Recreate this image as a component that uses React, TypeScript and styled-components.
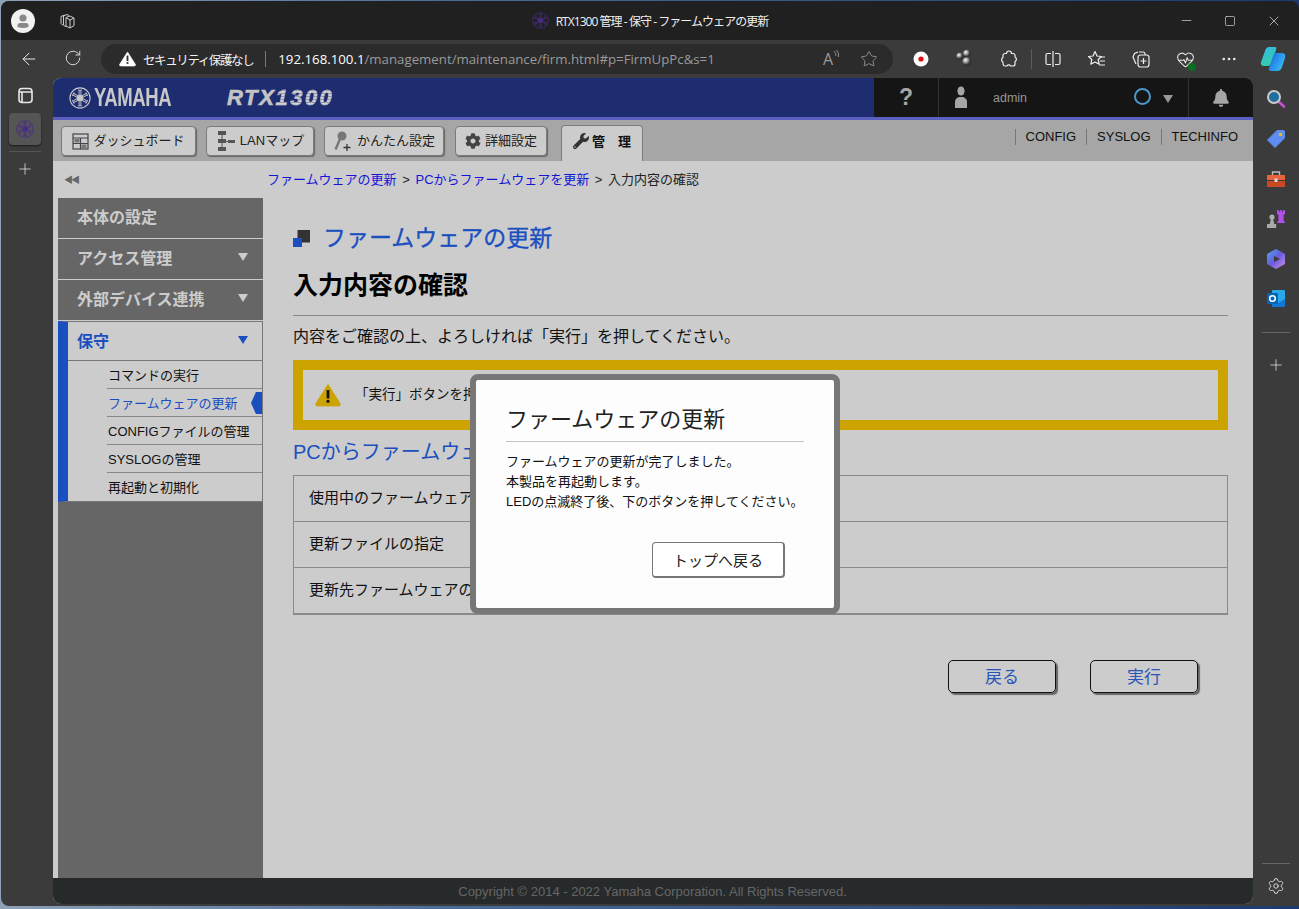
import React from "react";
import styled, { createGlobalStyle } from "styled-components";
import { ArrowLeft, RotateCw, Star, HeartPulse, Ellipsis, Minus, Square, X, Settings, Plus } from "lucide-react";
import { FaBell, FaCog, FaWrench } from "react-icons/fa";

const JP = `"Liberation Sans", "Noto Sans CJK JP", sans-serif`;
const UI = `"Open Sans", "Noto Sans CJK JP", sans-serif`;

const Global = createGlobalStyle`
  html, body { margin: 0; padding: 0; }
  body {
    width: 1299px;
    height: 909px;
    overflow: hidden;
    font-family: ${JP};
    background: linear-gradient(90deg, #8da2b8 0, #4a6a98 35%, #1d3a6e 100%);
  }
  * { box-sizing: border-box; }
`;

const Win = styled.div`
  position: relative;
  width: 1298px;
  height: 905px;
  margin: 1px 0 0 1px;
  background: #3b3b3b;
  border-radius: 8px 8px 0 8px;
  display: flex;
  flex-direction: column;
  overflow: hidden;
`;
const TitleBar = styled.div`
  height: 39px;
  background: #202020;
  display: grid;
  grid-template-columns: 1fr auto 1fr;
  align-items: center;
  color: #fff;
`;
const TitleLeft = styled.div`
  display: flex;
  align-items: center;
  gap: 23px;
  padding-left: 10px;
  color: #ccc;
`;
const Avatar = styled.div`
  width: 24px;
  height: 24px;
  border-radius: 50%;
  background: #f2f2f2;
  display: flex;
  align-items: center;
  justify-content: center;
`;
const TabTitle = styled.div`
  display: flex;
  align-items: center;
  gap: 7px;
  font: 12px ${UI};
  letter-spacing: -0.95px;
  color: #f0f0f0;
`;
const WinButtons = styled.div`
  display: flex;
  justify-content: flex-end;
  align-items: center;
  gap: 30px;
  padding-right: 17px;
  color: #eee;
`;
const Toolbar = styled.div`
  height: 38px;
  display: flex;
  align-items: center;
  color: #e8e8e8;
`;
const NavIcons = styled.div`
  width: 100px;
  display: flex;
  gap: 25px;
  padding-left: 18px;
`;
const Address = styled.div`
  width: 792px;
  height: 30px;
  border-radius: 15px;
  background: #2b2b2b;
  display: flex;
  align-items: center;
  padding: 0 15px 0 18px;
  font: 13.25px ${UI};
`;
const Secure = styled.span`
  margin-left: 7px;
  font-size: 12.5px;
  letter-spacing: -1.4px;
  color: #f2f2f2;
`;
const AddrSep = styled.span`
  width: 1px;
  height: 16px;
  margin: 0 12px;
  background: #777;
`;
const Host = styled.span`
  color: #fff;
`;
const Path = styled.span`
  color: #9a9a9a;
  flex: 1;
`;
const AddrIcons = styled.div`
  display: flex;
  align-items: center;
  gap: 20px;
  color: #999;
`;
const ReadAloud = styled.span`
  display: flex;
  align-items: flex-start;
  font: 16px "Open Sans", sans-serif;
  line-height: 18px;
`;
const ToolIcons = styled.div`
  display: flex;
  align-items: center;
  padding-left: 6px;
`;
const ToolCell = styled.div`
  width: 44px;
  height: 30px;
  display: flex;
  align-items: center;
  justify-content: center;
`;
const ToolSep = styled.div`
  width: 1px;
  height: 20px;
  margin: 0 -0.5px;
  background: #5c5c5c;
`;
const Body = styled.div`
  flex: 1;
  min-height: 0;
  display: flex;
`;
const LeftRail = styled.div`
  width: 52px;
  display: flex;
  flex-direction: column;
  align-items: center;
  padding: 9px 4px 0 0;
  color: #e8e8e8;
`;
const RailTile = styled.div`
  width: 32px;
  height: 32px;
  margin-top: 9px;
  border-radius: 4px;
  background: #555;
  display: flex;
  align-items: center;
  justify-content: center;
  box-shadow: 0 1px 2px #0008;
`;
const RailSep = styled.div`
  width: 32px;
  height: 1px;
  margin: 6px 0 8px;
  background: #555;
`;
const Page = styled.div`
  width: 1200px;
  margin-bottom: 2px;
  display: flex;
  flex-direction: column;
  position: relative;
  border-radius: 8px;
  overflow: hidden;
  background: #ccc;
`;
const RightRail = styled.div`
  width: 46px;
  padding-top: 1px;
  display: flex;
  flex-direction: column;
  align-items: center;
  color: #e8e8e8;
`;
const RailCell = styled.div`
  height: 40px;
  width: 100%;
  display: flex;
  align-items: center;
  justify-content: center;
`;
const RailLine = styled.div<{ $mt?: string; $mb?: string }>`
  width: 28px;
  height: 1px;
  background: #666;
  margin-top: ${(p) => p.$mt || "13px"};
  margin-bottom: ${(p) => p.$mb || "2px"};
`;
const HeaderBar = styled.header`
  height: 42px;
  display: flex;
  background: #1e2d70;
  border-bottom: 3px solid #5a5fc0;
`;
const Brand = styled.div`
  flex: 1;
  display: flex;
  align-items: center;
  padding-left: 16px;
  color: #c8c8c8;
`;
const Yamaha = styled.span`
  margin-left: 3px;
  width: 81px;
  font: bold 25px "Liberation Sans", sans-serif;
  transform: scaleX(0.74);
  transform-origin: left center;
  letter-spacing: -0.5px;
  white-space: nowrap;
`;
const ModelSolid = styled.span`
  margin-left: 52px;
  font: italic bold 22px "Liberation Sans", sans-serif;
  letter-spacing: 1.6px;
  color: #c4c4c4;
  -webkit-text-stroke: 0.6px #c4c4c4;
`;
const ModelStriped = styled.span`
  font: italic bold 22px "Liberation Sans", sans-serif;
  letter-spacing: 2.5px;
  background: repeating-linear-gradient(#d4d4d4 0 2px, #8f93b0 2px 3px);
  -webkit-background-clip: text;
  background-clip: text;
  color: transparent;
  -webkit-text-stroke: 0.5px #a9abbd;
`;
const HeaderRight = styled.div`
  width: 379px;
  background: #151515;
  display: flex;
  color: #a5a5a5;
`;
const HelpCell = styled.div`
  width: 65px;
  border-right: 1px solid #333;
  display: flex;
  align-items: center;
  justify-content: center;
  font: bold 23px "Liberation Sans", sans-serif;
`;
const UserCell = styled.div`
  width: 250px;
  border-right: 1px solid #333;
  display: flex;
  align-items: center;
  padding-left: 15px;
`;
const UserName = styled.span`
  margin-left: 25px;
  flex: 1;
  font-size: 12.5px;
  color: #959595;
`;
const StatusRing = styled.span`
  width: 17px;
  height: 17px;
  border: 2px solid #4b97c9;
  border-radius: 50%;
  margin: -3px 0 0 1px;
`;
const Caret = styled.span<{ $c?: string }>`
  width: 0;
  height: 0;
  border-left: 5px solid transparent;
  border-right: 5px solid transparent;
  border-top: 8px solid ${(p) => p.$c || "#999"};
`;
const HeadCaret = styled(Caret)`
  margin: 2px 15px 0 12px;
`;
const BellCell = styled.div`
  flex: 1;
  display: flex;
  align-items: center;
  justify-content: center;
  font-size: 18px;
`;
const NavBar = styled.nav`
  height: 41px;
  background: #a6a6a6;
  display: flex;
  align-items: flex-end;
  padding-left: 8px;
`;
const NavBtn = styled.div<{ $w: number; $mr: number }>`
  width: ${(p) => p.$w}px;
  height: 30px;
  margin: 0 ${(p) => p.$mr}px 5px 0;
  background: #ccc;
  border: 1px solid #7b7b7b;
  border-radius: 4px;
  box-shadow: 1px 1px 1px #666;
  display: flex;
  align-items: center;
  justify-content: center;
  gap: 4px;
  font-size: 13px;
  line-height: 26px;
  color: #222;
  white-space: nowrap;
`;
const ActiveTab = styled.div`
  width: 82px;
  height: 36px;
  background: #ccc;
  border: 1px solid #7b7b7b;
  border-bottom: 0;
  border-radius: 4px 4px 0 0;
  display: flex;
  align-items: center;
  justify-content: center;
  gap: 3px;
  font-weight: bold;
  font-size: 13px;
  color: #111;
  white-space: pre;
  padding-bottom: 6px;
`;
const NavLinks = styled.div`
  margin-left: auto;
  align-self: flex-start;
  margin-top: 9px;
  display: flex;
  padding-right: 5px;
`;
const NavLink = styled.span`
  border-left: 1px solid #777;
  padding: 0 10px;
  height: 16px;
  line-height: 16px;
  font-size: 13px;
  color: #111;
`;
const Main = styled.div`
  flex: 1;
  min-height: 0;
  display: flex;
`;
const Aside = styled.aside`
  width: 210px;
  display: flex;
  flex-direction: column;
`;
const Collapse = styled.div`
  height: 37px;
  padding: 14px 0 0 11px;
  color: #666;
  font-size: 9px;
  letter-spacing: -2px;
  line-height: 11px;
`;
const Menu = styled.div`
  flex: 1;
  margin-left: 5px;
  background: #666;
  display: flex;
  flex-direction: column;
  gap: 1px;
`;
const MenuHead = styled.div`
  height: 40px;
  background: #666;
  box-shadow: 0 1px 0 #ccc;
  display: flex;
  align-items: center;
  justify-content: space-between;
  padding: 0 15px 4px 19px;
  font-weight: bold;
  font-size: 16px;
  color: #ccc;
`;
const ActiveGroup = styled.div`
  background: #ccc;
  border: 1px solid #777;
  border-left: 10px solid #1a4fc0;
  margin-bottom: 1px;
`;
const ActiveHead = styled.div`
  height: 39px;
  border-bottom: 1px solid #777;
  display: flex;
  align-items: center;
  justify-content: space-between;
  padding: 0 14px 3px 9px;
  font-weight: bold;
  font-size: 16px;
  color: #1a4fc0;
`;
const SubItem = styled.div<{ $active?: boolean; $last?: boolean }>`
  position: relative;
  height: 28px;
  margin-left: 39px;
  display: flex;
  align-items: center;
  padding: 0 0 1px 1px;
  font-size: 13px;
  color: ${(p) => (p.$active ? "#1a4fc0" : "#111")};
  border-bottom: ${(p) => (p.$last ? "0" : "1px solid #888")};
`;
const ActiveTag = styled.span`
  position: absolute;
  right: 0;
  top: 3px;
  width: 11px;
  height: 22px;
  background: #1a4fc0;
  clip-path: polygon(100% 0, 45% 0, 0 50%, 45% 100%, 100% 100%);
`;
const Content = styled.main`
  flex: 1;
  min-width: 0;
`;
const Crumbs = styled.div`
  height: 37px;
  padding-left: 4px;
  line-height: 37px;
  font-size: 13px;
  color: #222;
`;
const CrumbLink = styled.span`
  color: #1414d8;
`;
const CrumbSep = styled.span`
  margin: 0 2px;
`;
const Inner = styled.div`
  padding: 0 25px 0 30px;
`;
const PageTitle = styled.h1`
  margin: 0;
  height: 57px;
  padding-top: 23px;
  display: flex;
  align-items: center;
  gap: 13px;
  font-size: 23px;
  line-height: 32px;
  font-weight: normal;
  color: #1a4fc0;
  -webkit-text-stroke: 0.3px #1a4fc0;
`;
const Sub = styled.h2`
  margin: 0;
  height: 61px;
  padding-top: 12px;
  border-bottom: 1px solid #8a8a8a;
  font-size: 25px;
  line-height: 36px;
  color: #000;
`;
const Lead = styled.p`
  margin: 0;
  height: 44px;
  line-height: 42px;
  font-size: 16px;
  color: #111;
`;
const Warning = styled.div`
  height: 70px;
  border: 10px solid #cca300;
  display: flex;
  align-items: center;
  padding-left: 12px;
  gap: 14px;
  font-size: 13.5px;
  color: #111;
`;
const WarningText = styled.span`
  margin-bottom: 4px;
`;
const Section = styled.h3`
  margin: 0;
  height: 45px;
  line-height: 44px;
  font-size: 20px;
  font-weight: normal;
  color: #1a4fc0;
`;
const InfoTable = styled.div`
  border: 1px solid #8a8a8a;
  border-bottom: 2px solid #8a8a8a;
`;
const Row = styled.div`
  height: 46px;
  padding: 0 0 4px 15px;
  border-top: 1px solid #8a8a8a;
  display: flex;
  align-items: center;
  font-size: 15px;
  color: #111;
  &:first-child {
    border-top: 0;
    height: 45px;
  }
`;
const Actions = styled.div`
  display: flex;
  justify-content: flex-end;
  gap: 34px;
  margin-top: 45px;
  padding-right: 30px;
`;
const ActionBtn = styled.div`
  width: 108px;
  height: 33px;
  border: 1px solid #111;
  border-radius: 5px;
  box-shadow: 2px 2px 1px #666;
  display: flex;
  align-items: center;
  justify-content: center;
  font-size: 17px;
  padding-bottom: 2px;
  color: #2a55b8;
`;
const Footer = styled.footer`
  height: 26px;
  background: #272a2b;
  color: #666;
  font-size: 13px;
  line-height: 27px;
  text-align: center;
  padding-right: 1px;
`;
const Dialog = styled.div`
  position: absolute;
  left: 417px;
  top: 296px;
  width: 370px;
  height: 240px;
  border: 6px solid #777;
  border-radius: 8px;
  background: #fdfdfd;
  padding: 23px 30px 0;
`;
const DialogTitle = styled.div`
  height: 39px;
  border-bottom: 1px solid #c4c4c4;
  font-size: 22px;
  line-height: 34px;
  color: #222;
`;
const DialogText = styled.p`
  margin: 10px 0 0;
  font-size: 13px;
  line-height: 20px;
  color: #111;
`;
const DialogBtn = styled.div`
  width: 133px;
  height: 36px;
  margin: 30px 0 0 146px;
  background: #fff;
  border: 1px solid #777;
  border-bottom-width: 2px;
  border-right-width: 2px;
  border-radius: 4px;
  display: flex;
  align-items: center;
  justify-content: center;
  font-size: 15px;
  color: #222;
`;
const Dot = styled.span`
  position: absolute;
  right: -1px;
  bottom: -2px;
  width: 8px;
  height: 8px;
  border-radius: 50%;
  background: #0a6f1e;
`;
const HealthWrap = styled.span`
  position: relative;
  display: flex;
`;

const Emblem = ({ size, color }: { size: number; color: string }) => (
  <svg width={size} height={size} viewBox="0 0 24 24" fill="none" stroke={color} strokeWidth="1.1">
    <circle cx="12" cy="12" r="11" strokeWidth="1.2" />
    <g strokeWidth="1">
      {[0, 60, 120, 180, 240, 300].map((a) => (
        <g key={a} transform={`rotate(${a} 12 12)`}>
          <path d="M11 9V3.500M13 9V3.500M10 3.500h4" />
        </g>
      ))}
    </g>
    <circle cx="12" cy="12" r="3" fill={color} />
  </svg>
);
const Person = () => (
  <svg width="18" height="18" viewBox="0 0 18 18">
    <circle cx="9" cy="6" r="3.600" fill="#888" />
    <path d="M3.500 15v-1.500a2.500 2.500 0 0 1 2.500-2.500h6a2.500 2.500 0 0 1 2.500 2.500V15q-5.500 2-11 0z" fill="#888" />
  </svg>
);
const Workspaces = () => (
  <svg width="18" height="18" viewBox="0 0 18 18" fill="none" stroke="#ccc" strokeWidth="1" strokeLinejoin="round">
    <path d="M8 5.500 12 4l4 2v7.500L12 16l-4-2z" />
    <path d="M8 5.500 12 8v8M12 8l4-2" />
    <path d="M5.500 4 9 2.500l2 1M5.500 4v9l2.500 2" />
    <path d="M3 4.500 6.500 3M3 4.500v7l2 2" />
  </svg>
);
const TabsIcon = () => (
  <svg width="17" height="17" viewBox="0 0 17 17" fill="none" stroke="#e8e8e8" strokeWidth="1.600">
    <rect x="2" y="1.500" width="13" height="14" rx="3" />
    <path d="M2 5h13M5 5v10" />
  </svg>
);
const UserIcon = () => (
  <svg width="14" height="23" viewBox="0 0 14 23" fill="#a5a5a5">
    <ellipse cx="7" cy="5" rx="3.600" ry="4.600" />
    <path d="M1 22v-6c0-3 2-5 6-5s6 2 6 5v6z" />
  </svg>
);
const TriWarn = ({ w, bg, fg }: { w: number; bg: string; fg: string }) => (
  <svg width={w} height={w * 0.92} viewBox="0 0 26 24">
    <path d="M13 1.500 25 20.500q1 2.500-2 2.500H3q-3 0-2-2.500z" fill={bg} stroke={bg} strokeLinejoin="round" />
    <rect x="11.600" y="7" width="2.800" height="8.500" fill={fg} />
    <rect x="11.600" y="17" width="2.800" height="2.800" fill={fg} />
  </svg>
);
const DashIcon = () => (
  <svg width="17" height="17" viewBox="0 0 17 17" fill="none" stroke="#444" strokeWidth="1.200">
    <rect x="1" y="1" width="15" height="15" />
    <path d="M1 5h15M8.500 5v11M1 10.500h15" />
    <path fill="#777" d="M2.500 6h5v3.500h-5zM9.500 11.500h5V15h-5z" stroke="none" />
  </svg>
);
const LanIcon = () => (
  <svg width="20" height="22" viewBox="0 0 20 22" fill="#555">
    <rect x="2" y="1" width="8" height="4" />
    <rect x="2" y="9" width="8" height="4" />
    <rect x="2" y="17" width="8" height="4" />
    <rect x="12" y="10" width="7" height="3" />
    <path d="M5.500 4h1v14h-1zM9 11h4v1H9z" />
  </svg>
);
const EasyIcon = () => (
  <svg width="20" height="22" viewBox="0 0 20 22">
    <circle cx="9" cy="6" r="4.500" fill="#777" />
    <path d="M7 9 2.500 19.500" stroke="#777" strokeWidth="2.400" />
    <path d="M14 14v7M10.500 17.500h7" stroke="#333" strokeWidth="1.300" />
  </svg>
);
const TitleSquares = () => (
  <svg width="17" height="17" viewBox="0 0 17 17">
    <rect x="4.500" y="0" width="12.500" height="12.500" fill="#333" />
    <rect x="0" y="8" width="9" height="9" fill="#1a4fc0" />
  </svg>
);
const RecordIcon = () => (
  <svg width="16" height="16" viewBox="0 0 16 16">
    <circle cx="8" cy="8" r="7.500" fill="#fff" />
    <circle cx="8" cy="8" r="2.600" fill="#e01010" />
  </svg>
);
const Balls = () => (
  <svg width="20" height="20" viewBox="0 0 20 20">
    <defs>
      <radialGradient id="ball" cx="35%" cy="30%">
        <stop offset="0" stopColor="#fff" />
        <stop offset="1" stopColor="#333" />
      </radialGradient>
    </defs>
    <circle cx="12" cy="5" r="4.200" fill="url(#ball)" />
    <circle cx="5" cy="7.500" r="3.800" fill="url(#ball)" />
    <circle cx="12" cy="13" r="4.800" fill="url(#ball)" />
  </svg>
);
const WavesIcon = () => (
  <svg width="7" height="10" viewBox="0 0 7 10" fill="none" stroke="#999" strokeWidth="0.900">
    <path d="M1 1q2.500 2 1.800 5M3.500 0q3 3 2 7" />
  </svg>
);
const ExtensionIcon = () => (
  <svg width="20" height="20" viewBox="0 0 20 20" fill="none" stroke="#eee" strokeWidth="1.200" strokeLinejoin="round">
    <path d="M7.500 4.500a2.500 2.500 0 0 1 5 0h1.500a2 2 0 0 1 2 2v1.500a2.500 2.500 0 0 1 0 4.500V15a2 2 0 0 1-2 2h-2.500a2 2 0 0 0-3.500 0H6a2 2 0 0 1-2-2v-2a2.500 2.500 0 0 1 0-4.500V6.500a2 2 0 0 1 2-2z" />
  </svg>
);
const SplitIcon = () => (
  <svg width="18" height="18" viewBox="0 0 18 18" fill="none" stroke="#eee" strokeWidth="1.200">
    <path d="M9 1v16M7 3.500H3.500a1.500 1.500 0 0 0-1.500 1.500v8a1.500 1.500 0 0 0 1.500 1.500H7M11 3.500h3.500A1.500 1.500 0 0 1 16 5v8a1.500 1.500 0 0 1-1.500 1.500H11" />
  </svg>
);
const FavList = () => (
  <svg width="20" height="20" viewBox="0 0 20 20" fill="none" stroke="#eee" strokeWidth="1.200" strokeLinejoin="round">
    <path d="M8 2.500 10 7l4.500.5-3.300 3 1 4.600L8 13l-4.200 2.100 1-4.600-3.300-3L6 7z" />
    <path d="M14 8h4M13 12h5M12 16h6" />
  </svg>
);
const Collections = () => (
  <svg width="20" height="20" viewBox="0 0 20 20" fill="none" stroke="#eee" strokeWidth="1.200">
    <path d="M7 3 3.500 4.500 2 8l3 7" />
    <rect x="7" y="6" width="11" height="12" rx="2.500" />
    <path d="M12.500 9v6M9.500 12h6M8 3h4a2 2 0 0 1 2 2v1" />
  </svg>
);
const HealthIcon = () => (
  <HealthWrap>
    <HeartPulse size={19} strokeWidth={1.3} />
    <Dot />
  </HealthWrap>
);
const Copilot = () => (
  <svg width="26" height="26" viewBox="0 0 26 26">
    <defs>
      <linearGradient id="cpa" x1="0" y1="0" x2="0.6" y2="1">
        <stop offset="0" stopColor="#33b4f0" />
        <stop offset="1" stopColor="#35d0a0" />
      </linearGradient>
      <linearGradient id="cpb" x1="0" y1="0" x2="1" y2="0.6">
        <stop offset="0" stopColor="#1a5fe0" />
        <stop offset="1" stopColor="#36bdf4" />
      </linearGradient>
    </defs>
    <path d="M9 1h6q2 0 1 3l-5 14q-1 2-3 2H3q-3-1-2-4L5 5q1-4 4-4z" fill="url(#cpa)" />
    <path d="M15 7h7q4 0 3 5l-3 9q-1 4-5 4h-6q-3 0-2-3l4-12q1-3 2-3z" fill="url(#cpb)" />
  </svg>
);
const MagIcon = () => (
  <svg width="20" height="20" viewBox="0 0 20 20" fill="none">
    <path d="m12.500 12.500 5.500 5" stroke="#c64fd6" strokeWidth="2.600" strokeLinecap="round" />
    <circle cx="8" cy="8" r="6" fill="#1f6f9f" stroke="#c9c9c9" strokeWidth="2" />
  </svg>
);
const TagIcon = () => (
  <svg width="20" height="20" viewBox="0 0 20 20">
    <path d="M11 1.500h6.500a1 1 0 0 1 1 1V9L9 18.500 1.500 11z" fill="#5e8cf0" stroke="#5e8cf0" strokeLinejoin="round" />
    <circle cx="14.500" cy="5.500" r="1.800" fill="#e8c010" />
  </svg>
);
const ToolboxIcon = () => (
  <svg width="20" height="18" viewBox="0 0 20 18">
    <path d="M6.500 5V2h7v3" fill="none" stroke="#bbb" strokeWidth="1.400" />
    <rect x="1" y="5" width="18" height="5" fill="#e8643a" />
    <rect x="1" y="11" width="18" height="6" fill="#c94a22" />
    <rect x="8.500" y="8.500" width="3" height="3.500" fill="#ddd" />
  </svg>
);
const ChessIcon = () => (
  <svg width="20" height="20" viewBox="0 0 20 20">
    <circle cx="6" cy="8" r="2.600" fill="#aaa" />
    <path d="M4.800 10h2.400l1 5h2v4H1v-4h2.800z" fill="#aaa" />
    <path d="M11 1h1.800v1.500h1.400V1h1.600v1.500h1.400V1H19v4l-1.400 1v6l1.400 1v1h-8v-1l1.400-1V6L11 5z" fill="#b050e8" />
  </svg>
);
const HexIcon = () => (
  <svg width="20" height="22" viewBox="0 0 20 22">
    <defs>
      <linearGradient id="hx" x1="0" y1="0" x2="1" y2="1">
        <stop offset="0" stopColor="#4aa8e8" />
        <stop offset="0.5" stopColor="#6a5ae0" />
        <stop offset="1" stopColor="#d090e0" />
      </linearGradient>
    </defs>
    <path d="M10 1 19 6v10l-9 5-9-5V6z" fill="url(#hx)" />
    <path d="M8 8 14 11 8 14z" fill="#3b3b3b" />
  </svg>
);
const OutlookIcon = () => (
  <svg width="20" height="20" viewBox="0 0 20 20">
    <rect x="6" y="1" width="13" height="17" rx="1" fill="#28a8ea" />
    <path d="M6 11l6.500 3L19 10v8H6z" fill="#0f78d4" />
    <rect x="1" y="4" width="11" height="11" rx="1" fill="#0364b8" />
    <circle cx="6.500" cy="9.500" r="2.800" fill="none" stroke="#fff" strokeWidth="1.500" />
  </svg>
);

const subItems = ["コマンドの実行", "ファームウェアの更新", "CONFIGファイルの管理", "SYSLOGの管理", "再起動と初期化"];

export default function App() {
  return (
    <>
      <Global />
      <Win>
        <TitleBar>
          <TitleLeft>
            <Avatar><Person /></Avatar>
            <Workspaces />
          </TitleLeft>
          <TabTitle>
            <Emblem size={17} color="#4a2a8a" />
            RTX1300 管理 - 保守 - ファームウェアの更新
          </TabTitle>
          <WinButtons>
            <Minus size={15} strokeWidth={1} />
            <Square size={12} strokeWidth={1.2} />
            <X size={16} strokeWidth={1} />
          </WinButtons>
        </TitleBar>
        <Toolbar>
          <NavIcons>
            <ArrowLeft size={20} strokeWidth={1.2} />
            <RotateCw size={18} strokeWidth={1.2} />
          </NavIcons>
          <Address>
            <TriWarn w={17} bg="#fff" fg="#2b2b2b" />
            <Secure>セキュリティ保護なし</Secure>
            <AddrSep />
            <Host>192.168.100.1</Host>
            <Path>/management/maintenance/firm.html#p=FirmUpPc&amp;s=1</Path>
            <AddrIcons>
              <ReadAloud>A<WavesIcon /></ReadAloud>
              <Star size={18} strokeWidth={1.2} />
            </AddrIcons>
          </Address>
          <ToolIcons>
            <ToolCell><RecordIcon /></ToolCell>
            <ToolCell><Balls /></ToolCell>
            <ToolCell><ExtensionIcon /></ToolCell>
            <ToolSep />
            <ToolCell><SplitIcon /></ToolCell>
            <ToolCell><FavList /></ToolCell>
            <ToolCell><Collections /></ToolCell>
            <ToolCell><HealthIcon /></ToolCell>
            <ToolCell><Ellipsis size={18} strokeWidth={1.6} /></ToolCell>
            <ToolCell><Copilot /></ToolCell>
          </ToolIcons>
        </Toolbar>
        <Body>
          <LeftRail>
            <TabsIcon />
            <RailTile><Emblem size={18} color="#4a2a8a" /></RailTile>
            <RailSep />
            <Plus size={18} strokeWidth={1} />
          </LeftRail>
          <Page>
            <HeaderBar>
              <Brand>
                <Emblem size={22} color="#c8c8c8" />
                <Yamaha>YAMAHA</Yamaha>
                <ModelSolid>RTX</ModelSolid>
                <ModelStriped>1300</ModelStriped>
              </Brand>
              <HeaderRight>
                <HelpCell>?</HelpCell>
                <UserCell>
                  <UserIcon />
                  <UserName>admin</UserName>
                  <StatusRing />
                  <HeadCaret />
                </UserCell>
                <BellCell><FaBell /></BellCell>
              </HeaderRight>
            </HeaderBar>
            <NavBar>
              <NavBtn $w={135} $mr={10}><DashIcon />ダッシュボード</NavBtn>
              <NavBtn $w={108} $mr={10}><LanIcon />LANマップ</NavBtn>
              <NavBtn $w={120} $mr={11}><EasyIcon />かんたん設定</NavBtn>
              <NavBtn $w={92} $mr={14}><FaCog color="#444" size={16} />詳細設定</NavBtn>
              <ActiveTab><FaWrench color="#333" size={16} />管　理</ActiveTab>
              <NavLinks>
                <NavLink>CONFIG</NavLink>
                <NavLink>SYSLOG</NavLink>
                <NavLink>TECHINFO</NavLink>
              </NavLinks>
            </NavBar>
            <Main>
              <Aside>
                <Collapse>◀◀</Collapse>
                <Menu>
                  <MenuHead>本体の設定</MenuHead>
                  <MenuHead>アクセス管理<Caret $c="#ccc" /></MenuHead>
                  <MenuHead>外部デバイス連携<Caret $c="#ccc" /></MenuHead>
                  <ActiveGroup>
                    <ActiveHead>保守<Caret $c="#1a4fc0" /></ActiveHead>
                    {subItems.map((s, i) => (
                      <SubItem key={s} $active={i === 1} $last={i === subItems.length - 1}>
                        {s}
                        {i === 1 && <ActiveTag />}
                      </SubItem>
                    ))}
                  </ActiveGroup>
                </Menu>
              </Aside>
              <Content>
                <Crumbs>
                  <CrumbLink>ファームウェアの更新</CrumbLink> <CrumbSep>&gt;</CrumbSep> <CrumbLink>PCからファームウェアを更新</CrumbLink> <CrumbSep>&gt;</CrumbSep> 入力内容の確認
                </Crumbs>
                <Inner>
                  <PageTitle><TitleSquares />ファームウェアの更新</PageTitle>
                  <Sub>入力内容の確認</Sub>
                  <Lead>内容をご確認の上、よろしければ「実行」を押してください。</Lead>
                  <Warning>
                    <TriWarn w={26} bg="#cca300" fg="#111" />
                    <WarningText>「実行」ボタンを押すと更新を開始します。</WarningText>
                  </Warning>
                  <Section>PCからファームウェアを更新</Section>
                  <InfoTable>
                    <Row>使用中のファームウェア</Row>
                    <Row>更新ファイルの指定</Row>
                    <Row>更新先ファームウェアの</Row>
                  </InfoTable>
                  <Actions>
                    <ActionBtn>戻る</ActionBtn>
                    <ActionBtn>実行</ActionBtn>
                  </Actions>
                </Inner>
              </Content>
            </Main>
            <Footer>Copyright © 2014 - 2022 Yamaha Corporation. All Rights Reserved.</Footer>
            <Dialog>
              <DialogTitle>ファームウェアの更新</DialogTitle>
              <DialogText>
                ファームウェアの更新が完了しました。<br />
                本製品を再起動します。<br />
                LEDの点滅終了後、下のボタンを押してください。
              </DialogText>
              <DialogBtn>トップへ戻る</DialogBtn>
            </Dialog>
          </Page>
          <RightRail>
            <RailCell><MagIcon /></RailCell>
            <RailCell><TagIcon /></RailCell>
            <RailCell><ToolboxIcon /></RailCell>
            <RailCell><ChessIcon /></RailCell>
            <RailCell><HexIcon /></RailCell>
            <RailCell><OutlookIcon /></RailCell>
            <RailLine $mb="12px" />
            <RailCell><Plus size={18} strokeWidth={1} /></RailCell>
            <RailLine $mt="auto" />
            <RailCell><Settings size={18} strokeWidth={1.2} /></RailCell>
          </RightRail>
        </Body>
      </Win>
    </>
  );
}
